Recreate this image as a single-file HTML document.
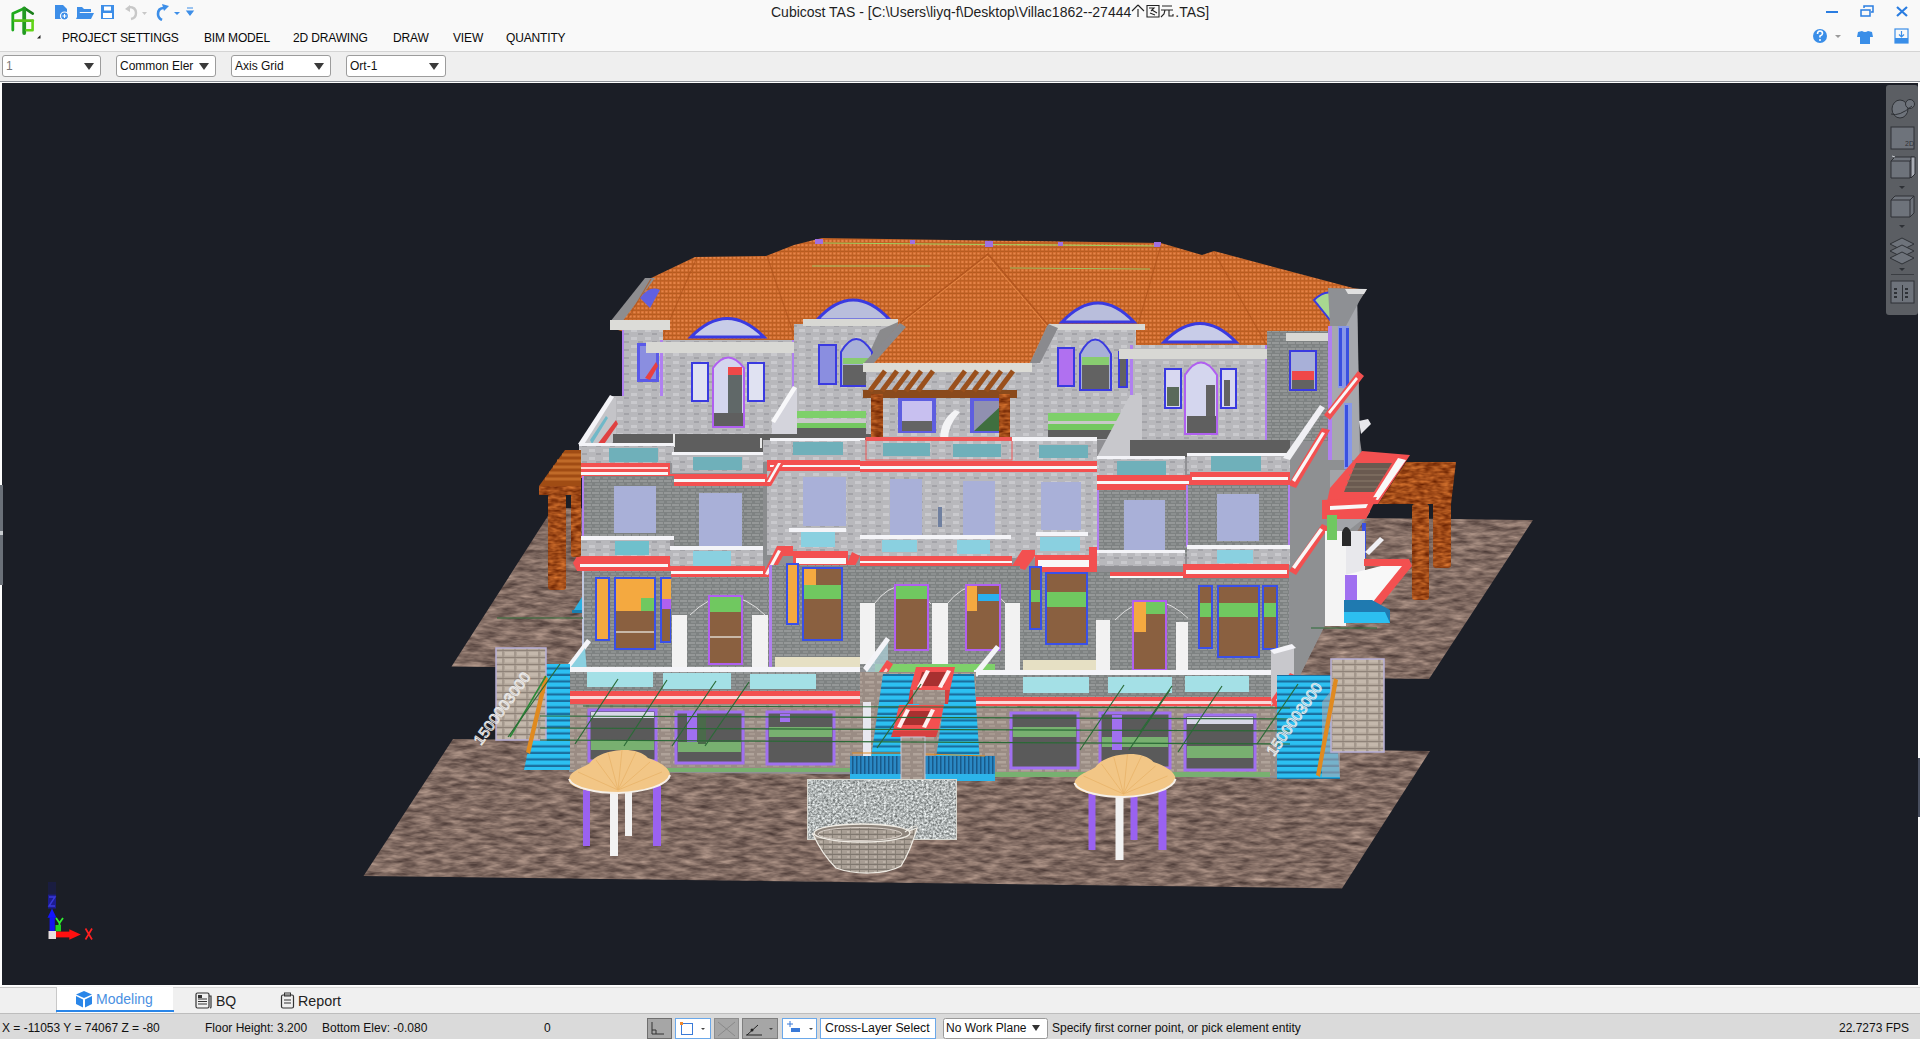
<!DOCTYPE html>
<html><head><meta charset="utf-8">
<style>
*{margin:0;padding:0;box-sizing:border-box}
html,body{width:1920px;height:1039px;overflow:hidden;background:#f0f0f0;font-family:"Liberation Sans",sans-serif;color:#1a1a1a}
.abs{position:absolute}
#top{left:0;top:0;width:1920px;height:51px;background:#f9f9f9}
#topline{left:0;top:51px;width:1920px;height:1px;background:#d4d4d4}
#tb{left:0;top:52px;width:1920px;height:29px;background:#efefef}
#tbline{left:0;top:81px;width:1920px;height:1px;background:#8e9298}
#vpwrap{left:0;top:82px;width:1920px;height:904px;background:#fdfdfd}
#vp{left:2px;top:83px;width:1916px;height:902px;background:#1b1e26;overflow:hidden}
.menu{top:31px;font-size:12px;letter-spacing:-0.15px;color:#0a0a0a;white-space:nowrap}
.combo{top:55px;height:22px;background:#fff;border:1px solid #9c9c9c;border-radius:3px;font-size:12px;padding:3px 0 0 3px;color:#111;overflow:hidden;white-space:nowrap}
.combo .arr{position:absolute;right:6px;top:7px;width:0;height:0;border-left:5px solid transparent;border-right:5px solid transparent;border-top:7px solid #3a3a3a}
#tabs{left:0;top:986px;width:1920px;height:28px;background:#f0f0f0}
#status{left:0;top:1014px;width:1920px;height:25px;background:#dadada}
.st{font-size:12px;top:1021px;color:#111;white-space:nowrap}
</style></head>
<body>
<div id="top" class="abs"></div>
<div id="topline" class="abs"></div>
<div id="tb" class="abs"></div>
<div id="tbline" class="abs"></div>
<div id="vpwrap" class="abs"></div>
<div id="vp" class="abs"></div>
<svg class="abs" style="left:0;top:0" width="1920" height="1039" viewBox="0 0 1920 1039">
<defs>
<filter id="fWood" x="0" y="0" width="1920" height="1039" filterUnits="userSpaceOnUse" color-interpolation-filters="sRGB">
<feTurbulence type="fractalNoise" baseFrequency="0.12 0.3" numOctaves="2" seed="5" result="n"/>
<feColorMatrix in="n" type="matrix" values="0.6 0 0 0 0.33  0.45 0 0 0 0.07  0.25 0 0 0 -0.03  0 0 0 0 1" result="c"/>
<feComposite in="c" in2="SourceGraphic" operator="in"/>
</filter>
<filter id="fGranite" x="807" y="779" width="150" height="61" filterUnits="userSpaceOnUse" color-interpolation-filters="sRGB">
<feTurbulence type="fractalNoise" baseFrequency="0.45" numOctaves="2" seed="11" result="n"/>
<feColorMatrix in="n" type="matrix" values="0.9 0 0 0 0.24  0.9 0 0 0 0.26  0.9 0 0 0 0.26  0 0 0 0 1" result="c"/>
<feComposite in="c" in2="SourceGraphic" operator="in"/>
</filter>
<filter id="fGround" x="0" y="0" width="1920" height="1039" filterUnits="userSpaceOnUse" color-interpolation-filters="sRGB">
<feTurbulence type="fractalNoise" baseFrequency="0.06 0.22" numOctaves="3" seed="7" result="n"/>
<feColorMatrix in="n" type="matrix" values="0.55 0 0 0 0.23  0.5 0 0 0 0.17  0.45 0 0 0 0.16  0 0 0 0 1" result="c"/>
<feComposite in="c" in2="SourceGraphic" operator="in"/>
</filter>
<pattern id="pRoof" width="4" height="4.2" patternUnits="userSpaceOnUse"><rect width="4" height="4.2" fill="#d46e30"/><rect x="0" y="3" width="4" height="1.2" fill="#b45a1e"/><rect x="0" y="0" width="0.9" height="4.2" fill="#bd5f22"/><rect x="1.5" y="0.8" width="1.8" height="1.6" fill="#e6884c"/></pattern>
<pattern id="pStoneL" width="14" height="8" patternUnits="userSpaceOnUse"><rect width="14" height="8" fill="#b8b8bc"/><rect x="1" y="1" width="6" height="3" fill="#c9c9cd"/><rect x="8" y="5" width="5" height="2" fill="#a3a3a8"/></pattern>
<pattern id="pStoneD" width="8" height="6" patternUnits="userSpaceOnUse"><rect width="8" height="6" fill="#7e8282"/><rect x="0" y="0" width="7" height="2" fill="#959898"/><rect x="3" y="3" width="5" height="2" fill="#8c9090"/></pattern>
<pattern id="pStoneB" width="12" height="8" patternUnits="userSpaceOnUse"><rect width="12" height="8" fill="#9a8c84"/><rect x="1" y="1" width="9" height="2.5" fill="#b0a39a"/><rect x="5" y="5" width="6" height="2" fill="#a79990"/></pattern>
<pattern id="pGround" width="22" height="14" patternUnits="userSpaceOnUse"><rect width="22" height="14" fill="#7a6259"/><ellipse cx="6" cy="4" rx="5" ry="2.5" fill="#8a7168"/><ellipse cx="16" cy="10" rx="5" ry="2.5" fill="#6c554d"/></pattern>
<pattern id="pStair" width="10" height="6.5" patternUnits="userSpaceOnUse"><rect width="10" height="6.5" fill="#2cc0f2"/><rect y="4.3" width="10" height="2.2" fill="#1a6e9e"/></pattern><pattern id="pStoneP" width="12" height="7" patternUnits="userSpaceOnUse"><rect width="12" height="7" fill="#b2a69a"/><rect x="1" y="1" width="9" height="3.5" fill="#c4b8ac"/><rect y="6" width="12" height="1" fill="#8e8278"/><rect x="10.5" y="0" width="1" height="6" fill="#968a80"/></pattern>
<pattern id="pWood" width="10" height="12" patternUnits="userSpaceOnUse"><rect width="10" height="12" fill="#b05418"/><path d="M1,2 Q5,6 9,2 M1,8 Q5,12 9,8" stroke="#d27a34" stroke-width="2" fill="none"/><rect x="4" y="5" width="2" height="2" fill="#8a3c10"/></pattern>
<pattern id="pGranite" width="6" height="6" patternUnits="userSpaceOnUse"><rect width="6" height="6" fill="#a8a8a8"/><rect x="1" y="1" width="2" height="2" fill="#d0d0d0"/><rect x="4" y="3" width="1.5" height="2" fill="#707070"/></pattern>
</defs>
<!-- GROUND -->
<g filter="url(#fGround)"><polygon points="553,508 1533,520 1429,679 451.5,666.5" fill="#7a6259"/>
<polygon points="453,739 1430,751 1342,888.5 363.5,876" fill="#7a6259"/></g>
<!-- BUILDING -->
<g id="bld">
<polygon points="579,444 611,396 623,396 623,330 1327,300 1357,292 1360,440 1370,512 1346,548 1325,625 1301,673 1290,778 569,772 569,690 583,690 583,478" fill="#909094"/>
<!-- ROOF -->
<polygon points="618,322 649,279 695,257 766,256 794,245 822,238 1161,243 1202,255 1214,251 1353,288 1366,290 1340,330 1270,350 1030,362 877,362 662,345 618,330" fill="url(#pRoof)"/>
<polygon points="610,322 645,278 655,278 622,322" fill="#8d8d90"/>

<!-- roof ridge lines -->
<line x1="822" y1="243" x2="1161" y2="246" stroke="#9fd060" stroke-width="1.2"/>
<line x1="812" y1="266" x2="930" y2="266" stroke="#a0c060" stroke-width="1"/>
<line x1="1010" y1="268" x2="1150" y2="269" stroke="#a0c060" stroke-width="1"/>
<rect x="815" y="239" width="8" height="5" fill="#a070e0"/><rect x="985" y="241" width="8" height="6" fill="#a070e0"/><rect x="910" y="240" width="5" height="4" fill="#a070e0"/><rect x="1058" y="242" width="5" height="4" fill="#a070e0"/><rect x="1154" y="242" width="7" height="5" fill="#a070e0"/>
<g stroke="#b0541c" stroke-width="1.2" opacity="0.7" fill="none">
<path d="M697,257 L662,338 M767,256 L795,338"/>
<path d="M1161,245 L1133,342 M1214,252 L1267,346"/>
<path d="M651,279 L628,318 M1353,289 L1330,324"/>
</g>
<!-- roof dormer arches -->
<path d="M691,337 Q727,300 764,337Z" fill="#c8cce8" stroke="#3a3ae0" stroke-width="3"/>
<path d="M817,320 Q853,280 890,320Z" fill="#b9bedc" stroke="#3a3ae0" stroke-width="3"/>
<path d="M1062,322 Q1098,284 1134,322Z" fill="#b9bedc" stroke="#3a3ae0" stroke-width="3"/>
<path d="M1164,342 Q1200,305 1236,342Z" fill="#c8cce8" stroke="#3a3ae0" stroke-width="3"/>
<path d="M1314,300 Q1330,285 1340,300 L1330,320Z" fill="#a8d890" stroke="#3a3ae0" stroke-width="2"/>
<path d="M640,298 Q650,285 660,290 L650,308Z" fill="#6060e0"/>
<!-- LEFT TOWER -->
<rect x="623" y="330" width="40" height="66" fill="url(#pStoneL)"/>
<rect x="622" y="330" width="2" height="66" fill="#b080f0"/>
<rect x="610" y="320" width="60" height="10" fill="#dcdcd8"/>
<rect x="637" y="343" width="22" height="39" fill="#5a5ae8"/><rect x="640" y="346" width="16" height="33" fill="#8a8ee0"/>
<polygon points="645,378 656,362 658,366 650,380" fill="#e84040"/>
<!-- LEFT DORMER WING -->
<rect x="662" y="340" width="132" height="95" fill="url(#pStoneL)"/>
<rect x="660" y="340" width="3" height="95" fill="#b080f0"/><rect x="792" y="340" width="3" height="95" fill="#b080f0"/>
<rect x="646" y="342" width="155" height="11" fill="#d8d8d4"/>
<rect x="692" y="363" width="16" height="38" fill="#e0e2f2" stroke="#3a3ae0" stroke-width="2"/>
<rect x="748" y="363" width="16" height="38" fill="#e0e2f2" stroke="#3a3ae0" stroke-width="2"/>
<path d="M713,427 L713,368 Q728,347 744,368 L744,427Z" fill="#d4d6ee" stroke="#b060f0" stroke-width="2"/>
<rect x="728" y="367" width="14" height="58" fill="#606868"/><rect x="728" y="367" width="14" height="8" fill="#f04848"/><rect x="714" y="413" width="29" height="13" fill="#5f5f5f"/>
<!-- MIDDLE-LEFT SECTION -->
<rect x="794" y="324" width="105" height="112" fill="url(#pStoneL)"/>
<rect x="803" y="319" width="95" height="7" fill="#d8d8d4"/>
<polygon points="880,330 898,322 898,360 866,390 866,360" fill="#8a8a8c"/>
<rect x="819" y="345" width="17" height="39" fill="#8a8ee0" stroke="#3a3ae0" stroke-width="2"/>
<path d="M841,386 L841,352 Q856,326 872,352 L872,386Z" fill="#a8b0d8" stroke="#3a3ae0" stroke-width="2"/>
<rect x="843" y="358" width="28" height="6" fill="#88cc70"/><rect x="843" y="365" width="28" height="20" fill="#626262"/>
<rect x="788" y="411" width="84" height="7" fill="#7ed06a"/><rect x="788" y="419" width="84" height="4" fill="#c8c8c8"/><rect x="788" y="423" width="84" height="5" fill="#74c860"/><rect x="790" y="428" width="82" height="8" fill="#5e5e5e"/>
<polygon points="772,438 772,420 794,388 797,388 797,438" fill="#d4d4dc"/><polygon points="771,421 793,386 797,388 775,423" fill="#f8f8fa"/>
<!-- CENTER GABLE + PERGOLA -->
<rect x="866" y="370" width="166" height="72" fill="url(#pStoneL)"/>
<polygon points="988,254 1050,323 1030,360 877,360 900,322" fill="url(#pRoof)"/>
<polygon points="988,254 900,322 877,360 882,345" fill="#cc6628"/>
<polygon points="877,360 900,322 903,326 886,362" fill="#909094"/>
<polygon points="1030,360 1050,323 1054,328 1037,364" fill="#909094"/>
<rect x="863" y="363" width="174" height="9" fill="#dcdcd6"/>
<rect x="898" y="398" width="38" height="35" fill="#5e5ee0"/><rect x="902" y="401" width="30" height="30" fill="#c8c0f0"/><rect x="902" y="421" width="30" height="10" fill="#646464"/>
<rect x="970" y="398" width="36" height="35" fill="#5e5ee0"/><rect x="974" y="401" width="28" height="30" fill="#9090b0"/><polygon points="974,431 1002,405 1002,431" fill="#3f6f3f"/>
<path d="M940,440 Q940,420 955,410 L960,412 Q948,425 948,440Z" fill="#f4f4f6"/>
<!-- CENTER-RIGHT SECTION -->
<rect x="1032" y="324" width="104" height="116" fill="url(#pStoneL)"/>
<rect x="1049" y="324" width="96" height="6" fill="#d8d8d4"/>
<rect x="1058" y="348" width="16" height="38" fill="#b070f0" stroke="#3a3ae0" stroke-width="2"/>
<path d="M1080,390 L1080,354 Q1095,325 1111,354 L1111,390Z" fill="#a8b0d8" stroke="#3a3ae0" stroke-width="2"/>
<rect x="1082" y="357" width="27" height="8" fill="#88cc70"/><rect x="1082" y="365" width="27" height="24" fill="#626262"/>
<rect x="1119" y="352" width="8" height="35" fill="#626262" stroke="#3a3ae0" stroke-width="2"/>
<rect x="1048" y="413" width="80" height="8" fill="#7ed06a"/><rect x="1048" y="421" width="80" height="3" fill="#c8c8c8"/><rect x="1048" y="424" width="80" height="6" fill="#74c860"/><rect x="1048" y="430" width="80" height="9" fill="#5e5e5e"/>
<polygon points="1136,391 1140,391 1140,460 1110,460 1110,442" fill="#d8d8e0"/>
<polygon points="1136,389 1140,392 1113,444 1109,442" fill="#ffffff"/>
<polygon points="988,254 1048,325 1030,363 866,363 900,323" fill="url(#pRoof)"/>
<polygon points="900,323 864,363 874,363 906,327" fill="#8a8a8e"/>
<polygon points="1048,324 1030,363 1040,363 1058,328" fill="#8a8a8e"/>
<path d="M900,323 L988,254 L1048,325" fill="none" stroke="#b4561e" stroke-width="1.5"/>
<path d="M902,323 L988,256 M987,256 L1046,325" fill="none" stroke="#e88a48" stroke-width="0.8"/>
<!-- RIGHT DORMER WING -->
<rect x="1131" y="345" width="137" height="96" fill="url(#pStoneL)"/>
<rect x="1130" y="345" width="3" height="95" fill="#b080f0"/><rect x="1265" y="345" width="3" height="95" fill="#b080f0"/>
<rect x="1119" y="349" width="156" height="10" fill="#d8d8d4"/>
<rect x="1165" y="369" width="16" height="39" fill="#d8d8f0" stroke="#3a3ae0" stroke-width="2"/><rect x="1167" y="387" width="12" height="19" fill="#5a6a5a"/>
<path d="M1185,434 L1185,375 Q1201,350 1217,375 L1217,434Z" fill="#d4d6ee" stroke="#b060f0" stroke-width="2"/>
<rect x="1206" y="385" width="9" height="45" fill="#626262"/><rect x="1187" y="416" width="29" height="17" fill="#5f5f5f"/>
<rect x="1221" y="369" width="15" height="39" fill="#d8d8f0" stroke="#3a3ae0" stroke-width="2"/><rect x="1224" y="380" width="6" height="26" fill="#626262"/>
<!-- RIGHT TOWER -->
<rect x="1267" y="331" width="62" height="110" fill="url(#pStoneD)"/>
<rect x="1286" y="333" width="51" height="8" fill="#d8d8d4"/>
<rect x="1290" y="351" width="26" height="39" fill="#a8b0d8" stroke="#3a3ae0" stroke-width="2"/><rect x="1292" y="371" width="22" height="9" fill="#f04848"/><rect x="1292" y="380" width="22" height="9" fill="#626262"/>
<polygon points="1330,305 1357,298 1360,480 1330,480" fill="#a6a8ae"/>
<rect x="1328" y="326" width="4" height="154" fill="#b080f0"/>
<rect x="1338" y="326" width="11" height="62" fill="#8898e8"/><rect x="1339" y="328" width="3" height="58" fill="#3a50e0"/><rect x="1346" y="328" width="3" height="58" fill="#3a50e0"/>
<rect x="1344" y="403" width="8" height="66" fill="#8898e8"/><rect x="1345" y="405" width="3" height="62" fill="#3a50e0"/>
<polygon points="1328,288 1367,289 1360,300 1346,326 1330,326" fill="#8e9094"/>
<polygon points="1345,289 1367,289 1364,294 1348,294" fill="#e0e0e0"/>
<polygon points="1359,421 1368,419 1371,424 1361,434" fill="#e8e8ec"/>
<!-- ===== TOP BALCONIES + 2ND FLOOR ===== -->
<!-- side walls base (right side) -->
<polygon points="1290,460 1360,460 1362,512 1346,548 1325,625 1301,673 1290,675" fill="#8e9092"/>
<polygon points="1330,470 1360,470 1362,520 1330,545" fill="#a2a4a8"/>
<rect x="1344" y="403" width="8" height="66" fill="#8898e8"/><rect x="1345" y="405" width="3" height="62" fill="#3a50e0"/>

<!-- left balcony -->
<rect x="611" y="396" width="52" height="40" fill="url(#pStoneL)"/>
<polygon points="579,444 611,396 616,398 616,440 585,462" fill="#c4c4c8"/>
<polygon points="578,444 610,395 614,397 583,446" fill="#f4f4f8"/>
<polygon points="590,440 606,416 608,418 592,444" fill="#70b8c8"/>
<polygon points="596,446 616,420 618,424 600,450" fill="#e04040"/>
<rect x="613" y="434" width="260" height="13" fill="#5e5e5e"/><rect x="672" y="446" width="92" height="8" fill="#5e5e5e"/><rect x="763" y="455" width="8" height="20" fill="#8a8c8e"/>
<rect x="673" y="434" width="2" height="13" fill="#e8e8e8"/><rect x="760" y="438" width="2" height="10" fill="#e8e8e8"/>
<rect x="579" y="444" width="95" height="19" fill="url(#pStoneL)"/>
<rect x="579" y="443" width="95" height="3" fill="#f4f4f8"/>
<rect x="609" y="448" width="49" height="14" fill="#6fb0ba"/>
<rect x="672" y="453" width="91" height="20" fill="url(#pStoneL)"/>
<rect x="672" y="452" width="91" height="3" fill="#f4f4f8"/>
<rect x="693" y="457" width="49" height="13" fill="#6fb0ba"/>
<rect x="763" y="440" width="103" height="22" fill="url(#pStoneL)"/>
<rect x="770" y="438" width="95" height="3" fill="#f4f4f8"/>
<rect x="793" y="442" width="50" height="13" fill="#6fb0ba"/>
<!-- center railing -->
<rect x="860" y="440" width="237" height="22" fill="url(#pStoneL)"/>
<rect x="866" y="437" width="146" height="4" fill="#f05858"/>
<rect x="866" y="438" width="146" height="22" fill="none" stroke="#f05858" stroke-width="1"/>
<rect x="883" y="443" width="47" height="13" fill="#6fb0ba"/>
<rect x="953" y="444" width="48" height="13" fill="#6fb0ba"/>
<rect x="1012" y="437" width="85" height="4" fill="#f4f4f8"/>
<rect x="1039" y="445" width="49" height="13" fill="#6fb0ba"/>
<!-- right balcony -->
<polygon points="1097,457 1130,395 1142,395 1142,457" fill="#c8c8cc"/><rect x="1130" y="440" width="160" height="17" fill="#5e5e5e"/>
<rect x="1097" y="457" width="88" height="18" fill="url(#pStoneL)"/>
<rect x="1097" y="456" width="88" height="3" fill="#f4f4f8"/>
<rect x="1117" y="461" width="49" height="14" fill="#6fb0ba"/>
<rect x="1187" y="454" width="103" height="20" fill="url(#pStoneL)"/>
<rect x="1187" y="453" width="103" height="3" fill="#f4f4f8"/>
<rect x="1211" y="456" width="50" height="15" fill="#6fb0ba"/>
<polygon points="1283,458 1320,405 1325,408 1290,460" fill="#f0f0f4"/>
<!-- RED BAND 1 -->
<polygon points="576,463 670,463 670,478 576,478 572,470" fill="#f35050"/>
<rect x="580" y="467" width="88" height="2" fill="#ffd8d8"/><rect x="580" y="472" width="88" height="3" fill="#f8f8f8"/>
<rect x="670" y="474" width="97" height="12" fill="#f35050"/><rect x="673" y="479" width="92" height="3" fill="#f8f8f8"/>
<rect x="767" y="460" width="93" height="11" fill="#f35050"/><rect x="770" y="465" width="90" height="2" fill="#f8f8f8"/>
<rect x="860" y="461" width="237" height="11" fill="#f35050"/><rect x="860" y="466" width="237" height="3" fill="#f8f8f8"/>
<rect x="1094" y="475" width="96" height="15" fill="#f35050"/><rect x="1097" y="481" width="92" height="3" fill="#f8f8f8"/>
<rect x="1190" y="472" width="100" height="13" fill="#f35050"/><rect x="1192" y="477" width="96" height="3" fill="#f8f8f8"/>
<polygon points="1288,485 1322,428 1330,430 1296,488" fill="#f35050"/>
<polygon points="1292,480 1322,432 1325,433 1295,482" fill="#f8f8f8"/>
<polygon points="1324,415 1358,371 1364,376 1330,420" fill="#f35050"/>
<polygon points="1328,412 1356,377 1358,379 1330,414" fill="#f8f8f8"/>
<!-- 2ND FLOOR WALLS -->
<rect x="583" y="476" width="91" height="62" fill="url(#pStoneD)"/>
<rect x="582" y="476" width="2" height="62" fill="#b080f0"/>
<rect x="614" y="486" width="42" height="47" fill="#a9b0d8"/>
<rect x="674" y="486" width="89" height="63" fill="url(#pStoneD)"/>
<rect x="699" y="493" width="43" height="54" fill="#a9b0d8"/>
<polygon points="763,486 775,472 775,560 763,560" fill="#8a8c8e"/>
<rect x="767" y="471" width="93" height="84" fill="url(#pStoneL)"/>
<rect x="803" y="477" width="43" height="49" fill="#a9b0d8"/>
<rect x="860" y="472" width="237" height="86" fill="url(#pStoneL)"/>
<rect x="890" y="479" width="32" height="56" fill="#a9b0d8"/>
<rect x="963" y="481" width="32" height="55" fill="#a9b0d8"/>
<rect x="1041" y="482" width="40" height="48" fill="#a9b0d8"/>
<rect x="938" y="507" width="4" height="20" fill="#7080a0"/>
<rect x="1099" y="490" width="88" height="66" fill="url(#pStoneD)"/>
<rect x="1097" y="490" width="2" height="66" fill="#b080f0"/>
<rect x="1124" y="500" width="41" height="52" fill="#a9b0d8"/>
<rect x="1187" y="485" width="103" height="62" fill="url(#pStoneD)"/>
<rect x="1186" y="485" width="2" height="62" fill="#b080f0"/><rect x="1288" y="485" width="2" height="80" fill="#b080f0"/>
<rect x="1217" y="494" width="42" height="47" fill="#a9b0d8"/>
<polygon points="763,486 777,460 786,460 771,486" fill="#f35050"/><polygon points="767,482 778,463 781,463 770,482" fill="#f8f8f8"/>
<!-- 2nd floor ledges/parapets -->
<rect x="580" y="539" width="90" height="19" fill="url(#pStoneL)"/><rect x="580" y="536" width="94" height="4" fill="#f4f4f8"/>
<rect x="615" y="541" width="34" height="14" fill="#6fc0cc"/>
<rect x="670" y="549" width="93" height="18" fill="url(#pStoneL)"/><rect x="670" y="546" width="93" height="4" fill="#f4f4f8"/>
<rect x="693" y="551" width="38" height="15" fill="#8ad0e0"/>
<rect x="789" y="531" width="57" height="20" fill="url(#pStoneL)"/><rect x="789" y="528" width="57" height="4" fill="#f4f4f8"/>
<rect x="801" y="532" width="34" height="15" fill="#8ad0e0"/>
<rect x="860" y="538" width="151" height="20" fill="url(#pStoneL)"/><rect x="860" y="535" width="151" height="4" fill="#f4f4f8"/>
<rect x="882" y="540" width="35" height="12" fill="#8ad0e0"/><rect x="957" y="540" width="33" height="14" fill="#8ad0e0"/>
<rect x="1036" y="535" width="52" height="20" fill="url(#pStoneL)"/><rect x="1036" y="532" width="52" height="4" fill="#f4f4f8"/>
<rect x="1040" y="537" width="40" height="14" fill="#8ad0e0"/>
<rect x="1097" y="552" width="88" height="14" fill="url(#pStoneL)"/><rect x="1097" y="550" width="88" height="3" fill="#f4f4f8"/>
<rect x="1187" y="549" width="103" height="16" fill="url(#pStoneL)"/><rect x="1187" y="545" width="103" height="4" fill="#f4f4f8"/>
<rect x="1217" y="550" width="36" height="13" fill="#8ad0e0"/>
<!-- RED BAND 2 -->
<polygon points="577,556 670,556 670,571 577,571 573,563" fill="#f35050"/><rect x="580" y="564" width="88" height="3" fill="#f8f8f8"/>
<rect x="668" y="566" width="97" height="12" fill="#f35050"/><rect x="670" y="571" width="93" height="3" fill="#f8f8f8"/>
<polygon points="761,578 777,546 793,546 793,556 783,556 769,580" fill="#f35050"/><polygon points="765,574 778,550 781,551 768,575" fill="#f8f8f8"/>
<rect x="793" y="551" width="55" height="19" fill="#f35050"/><rect x="796" y="558" width="50" height="6" fill="#f8f8f8"/>
<polygon points="844,571 852,552 860,556 852,572" fill="#f35050"/>
<rect x="860" y="556" width="152" height="10" fill="#f35050"/><rect x="860" y="561" width="152" height="2" fill="#f8f8f8"/>
<polygon points="1012,566 1022,550 1035,550 1035,556 1025,570" fill="#f35050"/>
<rect x="1035" y="555" width="62" height="18" fill="#f35050"/><rect x="1038" y="560" width="56" height="7" fill="#f8f8f8"/><rect x="1089" y="547" width="8" height="32" fill="#f35050"/>
<rect x="1094" y="572" width="90" height="11" fill="#f35050"/><rect x="1097" y="576" width="86" height="3" fill="#f8f8f8"/><rect x="1183" y="564" width="106" height="16" fill="#f35050"/><rect x="1186" y="570" width="101" height="4" fill="#f8f8f8"/>
<polygon points="1289,571 1322,524 1329,527 1296,575" fill="#f35050"/>
<polygon points="1292,567 1320,528 1323,530 1295,569" fill="#f8f8f8"/>
<!-- right side entry roof -->
<polygon points="1362,451 1410,455 1378,504 1326,506 1330,488" fill="#f35050"/>
<polygon points="1356,463 1392,463 1374,492 1344,492" fill="#6a5a50"/>
<g stroke="#8a7a6a" stroke-width="1"><line x1="1352" y1="469" x2="1388" y2="469"/><line x1="1349" y1="475" x2="1384" y2="475"/><line x1="1347" y1="481" x2="1380" y2="481"/><line x1="1345" y1="487" x2="1377" y2="487"/></g>
<polygon points="1398,458 1406,460 1378,500 1372,499" fill="#f8f8f8"/>
<polygon points="1322,500 1377,497 1366,519 1322,519" fill="#f35050"/>
<polygon points="1330,506 1368,504 1366,508 1330,510" fill="#f8f8f8"/>
<rect x="1362" y="523" width="4" height="35" fill="#3a50e0"/>
<!-- ===== 1ST FLOOR ===== -->
<rect x="583" y="571" width="88" height="98" fill="url(#pStoneD)"/>
<rect x="582" y="571" width="2" height="98" fill="#c0c8e0"/>
<rect x="596" y="578" width="13" height="62" fill="#f4a940" stroke="#3a50e8" stroke-width="2"/>
<rect x="615" y="578" width="40" height="71" fill="#8a6040" stroke="#3a50e8" stroke-width="2"/>
<rect x="616" y="579" width="38" height="32" fill="#f4a940"/><rect x="641" y="598" width="13" height="13" fill="#70c860"/>
<rect x="616" y="631" width="38" height="2" fill="#c8b8a8"/>
<rect x="661" y="578" width="10" height="64" fill="#8a6040" stroke="#3a50e8" stroke-width="2"/><rect x="662" y="579" width="9" height="20" fill="#f4a940"/><rect x="662" y="599" width="9" height="10" fill="#b060f0"/>
<rect x="671" y="577" width="98" height="92" fill="url(#pStoneD)"/>
<rect x="672" y="615" width="15" height="54" fill="#f2f2f2"/><rect x="752" y="615" width="16" height="54" fill="#f2f2f2"/>
<path d="M690,615 Q727,578 765,615" fill="none" stroke="#e0e0e0" stroke-width="1"/>
<rect x="709" y="596" width="33" height="68" fill="#8a6040" stroke="#b060f0" stroke-width="2"/><rect x="710" y="597" width="31" height="15" fill="#70c860"/><rect x="710" y="636" width="31" height="2" fill="#c8b8a8"/>
<rect x="769" y="565" width="91" height="104" fill="url(#pStoneD)"/>
<rect x="769" y="565" width="3" height="104" fill="#b080f0"/>
<rect x="787" y="564" width="11" height="60" fill="#f4a940" stroke="#3a50e8" stroke-width="2"/>
<rect x="803" y="568" width="39" height="72" fill="#8a6040" stroke="#3a50e8" stroke-width="2"/><rect x="804" y="585" width="37" height="14" fill="#70c860"/><rect x="804" y="569" width="12" height="16" fill="#f4a940"/>
<rect x="775" y="657" width="85" height="13" fill="#e6e0c4"/>
<rect x="860" y="566" width="160" height="104" fill="url(#pStoneD)"/>
<path d="M874,604 Q902,568 931,604 M947,604 Q976,568 1006,604" fill="none" stroke="#e0e0e0" stroke-width="1"/>
<rect x="895" y="585" width="33" height="65" fill="#8a6040" stroke="#b060f0" stroke-width="2"/><rect x="896" y="586" width="31" height="13" fill="#70c860"/>
<rect x="966" y="585" width="34" height="65" fill="#8a6040" stroke="#b060f0" stroke-width="2"/><rect x="967" y="586" width="10" height="25" fill="#f4a940"/><rect x="978" y="594" width="21" height="7" fill="#2ab0f0"/>
<rect x="860" y="603" width="15" height="61" fill="#f2f2f2"/><rect x="932" y="603" width="16" height="61" fill="#f2f2f2"/><rect x="1005" y="603" width="15" height="67" fill="#f2f2f2"/>
<rect x="875" y="664" width="120" height="10" fill="#7ed06a"/>
<rect x="1020" y="572" width="90" height="98" fill="url(#pStoneD)"/>
<rect x="1030" y="567" width="11" height="62" fill="#8a6040" stroke="#3a50e8" stroke-width="2"/><rect x="1031" y="590" width="9" height="12" fill="#70c860"/>
<rect x="1046" y="573" width="41" height="71" fill="#8a6040" stroke="#3a50e8" stroke-width="2"/><rect x="1047" y="592" width="39" height="15" fill="#70c860"/>
<rect x="1023" y="660" width="80" height="11" fill="#e6e0c4"/>
<rect x="1096" y="620" width="14" height="53" fill="#f2f2f2"/>
<rect x="1110" y="578" width="80" height="92" fill="url(#pStoneD)"/>
<path d="M1115,620 Q1152,582 1190,620" fill="none" stroke="#e0e0e0" stroke-width="1"/>
<rect x="1133" y="601" width="33" height="69" fill="#8a6040" stroke="#b060f0" stroke-width="2"/><rect x="1134" y="602" width="12" height="30" fill="#f4a940"/><rect x="1146" y="602" width="19" height="12" fill="#70c860"/>
<rect x="1176" y="622" width="16" height="53" fill="#f2f2f2"/>
<rect x="1188" y="578" width="101" height="97" fill="url(#pStoneD)"/>
<rect x="1199" y="586" width="13" height="62" fill="#8a6040" stroke="#3a50e8" stroke-width="2"/><rect x="1200" y="603" width="11" height="14" fill="#70c860"/>
<rect x="1218" y="586" width="41" height="71" fill="#8a6040" stroke="#3a50e8" stroke-width="2"/><rect x="1219" y="603" width="39" height="14" fill="#70c860"/>
<rect x="1263" y="586" width="14" height="63" fill="#8a6040" stroke="#3a50e8" stroke-width="2"/><rect x="1264" y="603" width="12" height="14" fill="#70c860"/>
<!-- right side column & entry -->
<rect x="1325" y="531" width="21" height="95" fill="#f4f4f4"/><rect x="1346" y="531" width="19" height="60" fill="#e8e8ec"/>
<rect x="1327" y="515" width="10" height="25" fill="#70c860"/>
<path d="M1342,546 L1342,532 Q1346,522 1351,532 L1351,546Z" fill="#2a2a2a"/>
<polygon points="1365,552 1380,537 1384,540 1369,555" fill="#f0f0f4"/>
<polygon points="1345,575 1409,559 1409,566 1372,610 1345,615" fill="#f8f8f8"/>
<polygon points="1364,559 1409,559 1412,566 1375,612 1368,608 1402,566 1364,566" fill="#f35050"/>
<rect x="1345" y="575" width="12" height="40" fill="#a070f0"/>
<polygon points="1344,600 1372,600 1390,610 1390,623 1344,623" fill="#1f7ab0"/>
<polygon points="1344,612 1385,612 1390,623 1344,623" fill="#2cbff0"/>
<!-- ===== FRONT BALCONY ===== -->
<polygon points="565,668 587,639 591,642 569,671" fill="#f4f4f8"/>
<polygon points="567,672 585,648 587,672" fill="#8ad0e0"/>
<rect x="565" y="671" width="295" height="20" fill="url(#pStoneD)"/>
<rect x="565" y="667" width="295" height="5" fill="#f4f4f8"/>
<rect x="587" y="672" width="66" height="15" fill="#a4e0e6"/><rect x="663" y="673" width="68" height="16" fill="#a4e0e6"/><rect x="750" y="674" width="66" height="15" fill="#a4e0e6"/>
<polygon points="562,691 860,691 860,704 562,704 558,698" fill="#f35050"/><rect x="566" y="696" width="294" height="3" fill="#fbd8d8"/>
<polygon points="974,673 1275,673 1275,697 974,697" fill="url(#pStoneD)"/>
<rect x="974" y="670" width="300" height="5" fill="#f4f4f8"/>
<rect x="1023" y="677" width="66" height="16" fill="#a4e0e6"/><rect x="1108" y="677" width="64" height="16" fill="#a4e0e6"/><rect x="1185" y="676" width="64" height="16" fill="#a4e0e6"/>
<polygon points="972,697 1275,697 1275,708 972,708 968,702" fill="#f35050"/><rect x="976" y="701" width="298" height="3" fill="#fbd8d8"/>
<polygon points="1271,650 1294,648 1294,675 1271,706" fill="#c8c8cc"/>
<polygon points="1270,650 1292,644 1296,648 1274,654" fill="#f4f4f8"/>
<polygon points="1271,700 1290,673 1297,676 1296,688 1276,710" fill="#f35050"/>
<polygon points="1276,700 1292,678 1294,680 1278,702" fill="#f8f8f8"/>
<!-- center stair railings -->
<polygon points="866,668 888,640 888,690 866,700" fill="#a8c8d0" opacity="0.8"/><polygon points="863,668 886,637 890,640 867,672" fill="#f4f4f8"/>
<polygon points="860,700 887,660 893,664 867,708" fill="#f35050"/><polygon points="866,698 886,668 888,670 868,700" fill="#fbd0d0"/>
<polygon points="973,673 996,645 1000,648 977,677" fill="#f4f4f8"/>
<!-- ===== GROUND FLOOR ===== -->
<rect x="569" y="704" width="291" height="66" fill="url(#pStoneB)"/>
<rect x="589" y="710" width="67" height="51" fill="#5a5a5a" stroke="#a070f0" stroke-width="3"/><rect x="591" y="740" width="63" height="10" fill="#78b070"/><rect x="591" y="712" width="63" height="6" fill="#d8d8e8"/>
<rect x="676" y="712" width="67" height="51" fill="#5a5a5a" stroke="#a070f0" stroke-width="3"/><rect x="678" y="742" width="63" height="10" fill="#78b070"/><rect x="687" y="712" width="10" height="30" fill="#a070f0"/><rect x="698" y="714" width="8" height="30" fill="#4a6a4a"/>
<rect x="767" y="712" width="67" height="52" fill="#5a5a5a" stroke="#a070f0" stroke-width="3"/><rect x="769" y="727" width="63" height="10" fill="#78b070"/><rect x="780" y="714" width="10" height="8" fill="#a070f0"/>
<rect x="667" y="768" width="193" height="4" fill="#78b070"/>
<rect x="974" y="706" width="301" height="70" fill="url(#pStoneB)"/>
<rect x="1011" y="713" width="67" height="55" fill="#5a5a5a" stroke="#a070f0" stroke-width="3"/><rect x="1013" y="727" width="63" height="10" fill="#78b070"/>
<rect x="1100" y="713" width="70" height="55" fill="#5a5a5a" stroke="#a070f0" stroke-width="3"/><rect x="1102" y="737" width="66" height="10" fill="#78b070"/><rect x="1112" y="715" width="10" height="35" fill="#a070f0"/>
<rect x="1185" y="715" width="70" height="55" fill="#5a5a5a" stroke="#a070f0" stroke-width="3"/><rect x="1187" y="746" width="66" height="12" fill="#78b070"/><rect x="1187" y="717" width="66" height="7" fill="#d8d8e8"/>
<rect x="974" y="772" width="296" height="5" fill="#78b070"/>
<!-- ===== STAIRS ===== -->
<rect x="860" y="672" width="116" height="106" fill="url(#pStoneB)"/>

<polygon points="546,664 570,664 570,770 524,770" fill="url(#pStair)"/>
<polygon points="883,674 925,674 905,779 868,779" fill="url(#pStair)"/>
<polygon points="948,674 974,674 981,779 933,779" fill="url(#pStair)"/>
<rect x="863" y="702" width="8" height="62" fill="#e8e8f0"/>
<polygon points="1277,675 1332,675 1340,779 1277,779" fill="url(#pStair)"/>

<polygon points="1322,702 1340,680 1340,777 1322,777" fill="#a8a8b0" opacity="0.6"/>
<pattern id="pGrate" width="4" height="20" patternUnits="userSpaceOnUse"><rect width="4" height="20" fill="#2a88c4"/><rect x="0" width="1.5" height="20" fill="#185a8a"/></pattern>
<rect x="850" y="756" width="145" height="18" fill="url(#pGrate)"/>
<rect x="850" y="774" width="145" height="7" fill="#2cb4ea"/>
<line x1="852" y1="753" x2="901" y2="753" stroke="#e08a20" stroke-width="1.2"/><line x1="925" y1="754" x2="985" y2="756" stroke="#e08a20" stroke-width="1.2"/>
<!-- planters -->
<polygon points="916,667 955,667 950,690 910,690" fill="#f35050"/>
<polygon points="922,672 947,672 944,686 918,686" fill="#a83030"/>
<polygon points="917,687 926,670 930,671 921,688" fill="#fff0f0"/><polygon points="938,687 947,670 951,671 942,688" fill="#fff0f0"/>
<polygon points="910,690 950,690 948,704 908,704" fill="#d84040"/>
<rect x="913" y="690" width="32" height="14" fill="url(#pStoneB)"/>
<polygon points="899,705 944,705 938,731 893,731" fill="#f35050"/>
<polygon points="905,711 930,711 927,725 901,725" fill="#a83030"/>
<polygon points="897,727 906,709 910,710 901,728" fill="#fff0f0"/><polygon points="922,727 931,709 935,710 926,728" fill="#fff0f0"/>
<polygon points="893,731 938,731 936,737 891,737" fill="#d84040"/>
<rect x="901" y="737" width="24" height="43" fill="url(#pStoneB)" stroke="#c8c8d8" stroke-width="1"/>
<!-- stone pillars -->
<rect x="496" y="648" width="50" height="92" fill="url(#pStoneP)" stroke="#b8b0d8" stroke-width="1.5"/>
<rect x="1331" y="659" width="53" height="93" fill="url(#pStoneP)" stroke="#b8b0d8" stroke-width="1.5"/>
<polygon points="526,752 544,676 548,678 530,754" fill="#e08a20"/><polygon points="1316,775 1334,678 1338,680 1320,777" fill="#e08a20"/><line x1="510" y1="737" x2="546" y2="676" stroke="#2a8a36" stroke-width="1.5"/>
<!-- ===== PERGOLAS ===== -->
<polygon points="565,450 581,450 581,486 539,486" fill="#a04c14"/>
<g stroke="#c06a28" stroke-width="3"><line x1="562" y1="455" x2="581" y2="455"/><line x1="557" y1="461" x2="581" y2="461"/><line x1="553" y1="467" x2="581" y2="467"/><line x1="549" y1="473" x2="581" y2="473"/><line x1="545" y1="479" x2="581" y2="479"/></g>
<rect x="539" y="486" width="42" height="9" fill="#b05418" filter="url(#fWood)"/>
<rect x="548" y="494" width="18" height="96" rx="3" fill="#b05418" filter="url(#fWood)"/>
<rect x="571" y="494" width="10" height="63" rx="2" fill="#b05418" filter="url(#fWood)"/>
<polygon points="572,613 582,597 582,613" fill="#2cb0e0"/><rect x="572" y="610" width="10" height="3" fill="#1a80b0"/>
<polygon points="1406,462 1456,462 1451,504 1378,504" fill="#b05418" filter="url(#fWood)"/>
<rect x="1412" y="504" width="17" height="96" rx="3" fill="#b05418" filter="url(#fWood)"/>
<rect x="1433" y="501" width="18" height="67" rx="3" fill="#b05418" filter="url(#fWood)"/>
<rect x="863" y="390" width="154" height="8" fill="#8a4a1c"/>
<rect x="871" y="394" width="12" height="43" fill="#b05418" filter="url(#fWood)"/>
<rect x="999" y="394" width="11" height="43" fill="#b05418" filter="url(#fWood)"/>
<g stroke="#9a501c" stroke-width="5">
<line x1="870" y1="391" x2="885" y2="371"/><line x1="882" y1="391" x2="897" y2="371"/><line x1="894" y1="391" x2="909" y2="371"/><line x1="906" y1="391" x2="921" y2="371"/><line x1="918" y1="391" x2="933" y2="371"/>
<line x1="950" y1="391" x2="965" y2="371"/><line x1="962" y1="391" x2="977" y2="371"/><line x1="974" y1="391" x2="989" y2="371"/><line x1="986" y1="391" x2="1001" y2="371"/><line x1="998" y1="391" x2="1013" y2="371"/>
</g>
<!-- ===== GRANITE & BASKET ===== -->
<rect x="807" y="779" width="150" height="61" fill="#b0b4b4" filter="url(#fGranite)"/>
<rect x="807.5" y="779.5" width="149" height="60" fill="none" stroke="#d8d8d0" stroke-width="1"/>
<pattern id="pBasket" width="9" height="5" patternUnits="userSpaceOnUse"><rect width="9" height="5" fill="#a89e94"/><rect y="3.8" width="9" height="1.2" fill="#7e766e"/><rect x="4" y="0" width="1" height="4" fill="#8a8278"/><rect x="1" y="1" width="2.5" height="2" fill="#bcb2a8"/></pattern>
<path d="M813,834 C820,850 828,860 836,868 C855,875 885,875 901,866 C908,855 913,842 917,828 C895,838 835,842 813,834Z" fill="url(#pBasket)" stroke="#f0ece4" stroke-width="1.2"/>
<ellipse cx="862" cy="833" rx="48" ry="9" fill="#8e857c" stroke="#f0ece4" stroke-width="1.4"/>
<ellipse cx="860" cy="834" rx="42" ry="6.5" fill="url(#pBasket)" stroke="#e8e0d8" stroke-width="0.8"/>
<path d="M905,832 Q912,826 917,826" fill="none" stroke="#f0ece4" stroke-width="1.2"/>
<!-- ===== TABLES ===== -->
<g transform="translate(0,0)">
<rect x="583" y="788" width="7" height="58" fill="#9a62f0"/><rect x="653" y="786" width="8" height="60" fill="#9a62f0"/>
<rect x="610" y="790" width="8" height="66" fill="#f2f2f2"/><rect x="625" y="790" width="7" height="46" fill="#f2f2f2"/>
<path d="M569,780 C569,771 583,768 590,763 C598,750 636,744 648,758 C660,762 670,768 670,775 C668,786 640,792 618,793 C595,793 569,789 569,780Z" fill="#f2c686"/>
<g stroke="#e6ae62" stroke-width="0.8" opacity="0.8"><path d="M618,790 L596,760 M618,790 L608,752 M618,790 L622,750 M618,790 L636,752 M618,790 L650,762 M618,790 L662,772 M618,790 L578,772"/></g>
<path d="M569,779 C573,789 600,793 618,793 C645,792 668,785 670,775" fill="none" stroke="#f6f0e8" stroke-width="2"/>
</g>
<g transform="translate(505.5,4)">
<rect x="583" y="788" width="7" height="58" fill="#9a62f0"/><rect x="653" y="786" width="8" height="60" fill="#9a62f0"/>
<rect x="610" y="790" width="8" height="66" fill="#f2f2f2"/><rect x="625" y="790" width="7" height="46" fill="#9a62f0"/>
<path d="M569,780 C569,771 583,768 590,763 C598,750 636,744 648,758 C660,762 670,768 670,775 C668,786 640,792 618,793 C595,793 569,789 569,780Z" fill="#f2c686"/>
<g stroke="#e6ae62" stroke-width="0.8" opacity="0.8"><path d="M618,790 L596,760 M618,790 L608,752 M618,790 L622,750 M618,790 L636,752 M618,790 L650,762 M618,790 L662,772 M618,790 L578,772"/></g>
<path d="M569,779 C573,789 600,793 618,793 C645,792 668,785 670,775" fill="none" stroke="#f6f0e8" stroke-width="2"/>
</g>
<!-- dimension lines -->
<g stroke="#2a6a36" stroke-width="1.2" fill="none">
<line x1="497" y1="618" x2="583" y2="618"/><line x1="1311" y1="628" x2="1377" y2="628"/>
<line x1="583" y1="706" x2="1290" y2="708"/><line x1="540" y1="716" x2="1290" y2="719"/>
<line x1="540" y1="728" x2="1290" y2="731"/><line x1="540" y1="740" x2="1290" y2="744"/>
<line x1="575" y1="744" x2="618" y2="679"/><line x1="624" y1="746" x2="667" y2="680"/>
<line x1="672" y1="746" x2="716" y2="681"/><line x1="705" y1="746" x2="749" y2="682"/>
<line x1="877" y1="748" x2="921" y2="684"/><line x1="1080" y1="750" x2="1124" y2="685"/>
<line x1="1129" y1="750" x2="1170" y2="690"/><line x1="1140" y1="732" x2="1172" y2="686"/><line x1="1178" y1="752" x2="1222" y2="686"/>
<line x1="508" y1="737" x2="560" y2="664"/><line x1="1257" y1="744" x2="1298" y2="684"/>
</g>
<text transform="translate(481,746) rotate(-54)" font-family="Liberation Sans" font-size="15" fill="none" stroke="#ececec" stroke-width="0.9" letter-spacing="0.2">1500003000</text>
<text transform="translate(1274,757) rotate(-55)" font-family="Liberation Sans" font-size="15" fill="none" stroke="#ececec" stroke-width="0.9" letter-spacing="0.2">1500003000</text>
</g>
</svg>


<div class="abs" style="left:0;top:485px;width:3px;height:100px;background:#6a7078"></div>
<div class="abs" style="left:0;top:531px;width:3px;height:4px;background:#c8ccd0"></div>
<div class="abs" style="left:1918px;top:758px;width:2px;height:59px;background:#4a5060"></div>
<!-- menu -->
<div class="abs menu" style="left:62px">PROJECT SETTINGS</div>
<div class="abs menu" style="left:204px">BIM MODEL</div>
<div class="abs menu" style="left:293px">2D DRAWING</div>
<div class="abs menu" style="left:393px">DRAW</div>
<div class="abs menu" style="left:453px">VIEW</div>
<div class="abs menu" style="left:506px">QUANTITY</div>
<div class="abs" id="title" style="left:771px;top:4px;font-size:14px;color:#1e1e1e;white-space:nowrap">Cubicost TAS - [C:\Users\liyq-f\Desktop\Villac1862--27444<svg width="44" height="14" viewBox="0 0 44 14" style="vertical-align:-1px"><g fill="none" stroke="#222" stroke-width="1.1"><path d="M7,1 L1,7 M7,1 L13,7 M7,5 L7,13"/><path d="M16,1.5 H28 V13 H16Z M18,4 L23,4 L20,7 M21,6 L26,9 M19,9 L24,11"/><path d="M31,2 H41 M30,6 H42 M34,6 L33,10 L30,13 M38,6 V12 H42 V10"/></g></svg>.TAS]</div>
<!-- logo -->
<svg class="abs" style="left:0;top:0" width="46" height="42" viewBox="0 0 46 42">
<g fill="none" stroke-linecap="round" stroke-linejoin="round">
<path d="M12.8,30 V13.5 L24,8.5" stroke="#1eaa1e" stroke-width="2.8"/>
<path d="M24.3,8.2 L32.8,13.6" stroke="#1a7e1a" stroke-width="2.6"/>
<path d="M24.2,8.5 V33" stroke="#229a22" stroke-width="3.8"/>
<path d="M14.5,20.6 H32.8" stroke="#58c01a" stroke-width="2.6"/>
<path d="M32.6,20.8 V30.2 H26.5" stroke="#62d418" stroke-width="2.6"/>
</g>
<polygon points="40.5,35 40.5,38.5 37,38.5" fill="#222"/>
</svg>
<!-- quick access -->
<svg class="abs" style="left:52px;top:3px" width="145" height="18" viewBox="0 0 145 18">
<path d="M3,2 H11 L15,6 V16 H3Z" fill="#3d8ee8"/><circle cx="12.5" cy="13" r="4" fill="#3d8ee8" stroke="#fff" stroke-width="1.2"/><path d="M10.5,13 H14.5 M12.5,11 V15" stroke="#fff" stroke-width="1.1"/>
<path d="M25,4 H30 L32,6 H39 V9 H28 L25,16Z" fill="#3d8ee8"/><path d="M27,10 H42 L39,16 H24Z" fill="#3d8ee8"/>
<path d="M49,2 H62 V16 H49Z" fill="#3d8ee8"/><rect x="52" y="3.5" width="7" height="4" fill="#fff"/><rect x="51" y="10" width="9" height="5" fill="#fff"/>
<path d="M77,4 Q84,4 84,10 Q84,15 79,16" fill="none" stroke="#c8c8c8" stroke-width="2.4"/><path d="M73,6 L78,2 L78,9Z" fill="#c8c8c8"/>
<path d="M90,9 L95,9 L92.5,12Z" fill="#c8c8c8"/>
<path d="M112,5 Q106,5 106,11 Q106,15 110,17" fill="none" stroke="#3d8ee8" stroke-width="2.6"/><path d="M110,1 L117,3 L112,8Z" fill="#3d8ee8"/>
<path d="M122,9 L128,9 L125,12Z" fill="#3d8ee8"/>
<path d="M135,5 H141 M135,8 L141,8 L138,12Z" stroke="#3d8ee8" stroke-width="1.2" fill="#3d8ee8"/>
</svg>
<!-- window controls -->
<svg class="abs" style="left:1810px;top:2px" width="110" height="46" viewBox="0 0 110 46">
<rect x="16" y="9" width="12" height="2" fill="#2a7de1"/>
<rect x="51" y="8" width="9" height="6" fill="none" stroke="#2a7de1" stroke-width="1.5"/><path d="M54,6 V4 H63 V10 H61" fill="none" stroke="#2a7de1" stroke-width="1.5"/>
<path d="M87,5 L97,14 M97,5 L87,14" stroke="#2a7de1" stroke-width="2.2"/>
<circle cx="10" cy="34" r="7" fill="#3a8ee8"/><path d="M7.5,32 Q7.5,29 10,29 Q12.5,29 12.5,31.5 Q12.5,33 10,34 V35.5" fill="none" stroke="#fff" stroke-width="1.6"/><circle cx="10" cy="38" r="1" fill="#fff"/>
<path d="M25,33 L31,33 L28,36Z" fill="#9a9a9a"/>
<path d="M48,30 L52,29 Q55,31 58,29 L62,30 L63,35 L60,35 V42 H50 V35 H47Z" fill="#3a8ee8"/>
<rect x="85" y="27" width="13" height="14" fill="none" stroke="#3a8ee8" stroke-width="1.2"/><rect x="85" y="36" width="13" height="5" fill="#3a8ee8"/><path d="M91.5,29 V35 M89,32.5 L91.5,35 L94,32.5" fill="none" stroke="#3a8ee8" stroke-width="1.2"/>
</svg>

<!-- combos -->
<div class="abs combo" style="left:2px;width:99px;color:#777">1<span class="arr"></span></div>
<div class="abs combo" style="left:116px;width:100px">Common Eler<span class="arr"></span></div>
<div class="abs combo" style="left:231px;width:100px">Axis Grid<span class="arr"></span></div>
<div class="abs combo" style="left:346px;width:100px">Ort-1<span class="arr"></span></div>

<!-- right viewport toolbar -->
<svg class="abs" style="left:1885px;top:84px" width="34" height="232" viewBox="0 0 34 232">
<rect x="1" y="1" width="32" height="230" rx="3" fill="#5b5e63"/>
<g fill="#6e737b" stroke="#2e3136" stroke-width="1">
<ellipse cx="15" cy="25" rx="8" ry="9"/><circle cx="25" cy="20" r="4.5"/>
<path d="M6,30 Q14,33 27,22" fill="none"/>
<rect x="6" y="43" width="23" height="22"/>
<path d="M6,77 L10,73 H29 V90 L25,94 H6Z"/><path d="M6,77 H25 V94 M25,77 L29,73" fill="none"/>
<path d="M6,116 L10,112 H29 V129 L25,133 H6Z"/><path d="M6,116 H25 V133 M25,116 L29,112" fill="none"/>
<path d="M17,154 L29,160 L17,166 L5,160Z"/><path d="M17,161 L29,167 L17,173 L5,167Z"/><path d="M17,168 L29,174 L17,180 L5,174Z"/>
<rect x="6" y="197" width="23" height="22"/>
</g>
<path d="M7,72 L10,73" stroke="#c8ccd2"/>
<polygon points="26,73 30,73 30,90 26,94" fill="#a8acb4" stroke="#2e3136" stroke-width="1"/>
<text x="20" y="62" font-size="7" fill="#2e3136" font-family="Liberation Sans">2D</text>
<g fill="#2e3136"><path d="M14,102 L20,102 L17,105Z"/><path d="M14,141 L20,141 L17,144Z"/><path d="M14,184 L20,184 L17,187Z"/></g>
<rect x="6" y="190" width="23" height="1" fill="#3a3d42"/>
<g fill="#2e3136"><rect x="9" y="204" width="3" height="2"/><rect x="9" y="208" width="3" height="2"/><rect x="9" y="212" width="3" height="2"/><rect x="20" y="204" width="3" height="2"/><rect x="20" y="208" width="3" height="2"/><rect x="20" y="212" width="3" height="2"/><rect x="17" y="201" width="1" height="16"/><!-- dimension lines -->
<g stroke="#2a6a36" stroke-width="1.2" fill="none">
<line x1="497" y1="618" x2="583" y2="618"/><line x1="1311" y1="628" x2="1377" y2="628"/>
<line x1="583" y1="706" x2="1290" y2="708"/><line x1="540" y1="716" x2="1290" y2="719"/>
<line x1="540" y1="728" x2="1290" y2="731"/><line x1="540" y1="740" x2="1290" y2="744"/>
<line x1="575" y1="744" x2="618" y2="679"/><line x1="624" y1="746" x2="667" y2="680"/>
<line x1="672" y1="746" x2="716" y2="681"/><line x1="705" y1="746" x2="749" y2="682"/>
<line x1="877" y1="748" x2="921" y2="684"/><line x1="1080" y1="750" x2="1124" y2="685"/>
<line x1="1129" y1="750" x2="1170" y2="690"/><line x1="1140" y1="732" x2="1172" y2="686"/><line x1="1178" y1="752" x2="1222" y2="686"/>
<line x1="508" y1="737" x2="560" y2="664"/><line x1="1257" y1="744" x2="1298" y2="684"/>
</g>
<text transform="translate(481,746) rotate(-54)" font-family="Liberation Sans" font-size="15" fill="none" stroke="#ececec" stroke-width="0.9" letter-spacing="0.2">1500003000</text>
<text transform="translate(1274,757) rotate(-55)" font-family="Liberation Sans" font-size="15" fill="none" stroke="#ececec" stroke-width="0.9" letter-spacing="0.2">1500003000</text>
</g>
</svg>

<!-- axis indicator -->
<svg class="abs" style="left:40px;top:880px" width="60" height="64" viewBox="0 0 60 64">
<rect x="8" y="2" width="8" height="12" fill="#1a1d40"/>
<rect x="8" y="14.5" width="8" height="14" fill="#1c1c90"/>
<path d="M9,17 H15 L9,26 H15" fill="none" stroke="#3a3ad8" stroke-width="1.4"/>
<polygon points="7.5,37.7 12,28.5 16.5,37.7" fill="#1414ff"/>
<rect x="9.6" y="37" width="5.2" height="14" fill="#1414f0"/>
<path d="M16,38 L19.5,43 L23,38 M19.5,43 V49" fill="none" stroke="#30f030" stroke-width="1.8"/>
<rect x="15.5" y="45" width="5.5" height="6.5" fill="#20d020"/>
<rect x="8.5" y="51" width="7.5" height="8" fill="#e8e0e0"/>
<rect x="16" y="51.6" width="14" height="5.8" fill="#ff1010"/>
<polygon points="29.3,49.3 40.8,54.5 29.3,59.7" fill="#ff1010"/>
<path d="M45.5,48.5 L52,59.5 M52,48.5 L45.5,59.5" stroke="#ff2020" stroke-width="1.7"/>
</svg>
<div id="tabs" class="abs"></div>
<div id="status" class="abs"></div>
<!-- tab bar -->
<div class="abs" style="left:0;top:986px;width:1920px;height:1px;background:#fafafa"></div>
<div class="abs" style="left:0;top:987px;width:57px;height:26px;border-top:1px solid #c8c8c8;border-right:1px solid #c8c8c8;background:#f0f0f0"></div>
<div class="abs" style="left:57px;top:987px;width:116px;height:26px;background:#ffffff"></div>
<div class="abs" style="left:56px;top:1010px;width:118px;height:2px;background:#2a86e8"></div>
<div class="abs" style="left:0;top:1013px;width:1920px;height:1px;background:#bdbdbd"></div>
<div class="abs" style="left:173px;top:987px;width:1747px;height:1px;background:#d8d8d8"></div>
<svg class="abs" style="left:75px;top:991px" width="18" height="17" viewBox="0 0 18 17">
<polygon points="9,0 17,3.5 9,7 1,3.5" fill="#2a86e8"/><polygon points="1,5 8,8.5 8,16.5 1,13" fill="#2a86e8"/><polygon points="10,8.5 17,5 17,13 10,16.5" fill="#2a86e8"/>
</svg>
<div class="abs" style="left:96px;top:991px;font-size:14px;color:#4a90e2;white-space:nowrap">Modeling</div>
<svg class="abs" style="left:195px;top:992px" width="18" height="17" viewBox="0 0 18 17">
<rect x="1" y="1" width="13" height="15" rx="1.5" fill="none" stroke="#333" stroke-width="1.2"/><path d="M14,4 H16 V15 Q16,16 15,16" fill="none" stroke="#333" stroke-width="1.2"/>
<path d="M3,4 H7 M3,7 H12 M3,9.5 H12 M3,12 H12" stroke="#333" stroke-width="1"/><rect x="3" y="3" width="4" height="3" fill="#333"/>
</svg>
<div class="abs" style="left:216px;top:993px;font-size:14px;color:#222;white-space:nowrap">BQ</div>
<svg class="abs" style="left:280px;top:992px" width="15" height="17" viewBox="0 0 15 17">
<rect x="1.5" y="3" width="12" height="13" rx="1.5" fill="none" stroke="#333" stroke-width="1.2"/><rect x="4.5" y="1" width="6" height="3" fill="none" stroke="#333" stroke-width="1"/>
<path d="M4,8 H11 M4,11 H11" stroke="#333" stroke-width="1"/>
</svg>
<div class="abs" style="left:298px;top:993px;font-size:14.3px;color:#222;white-space:nowrap">Report</div>

<!-- status bar -->
<div class="abs st" style="left:2px">X = -11053 Y = 74067 Z = -80</div>
<div class="abs st" style="left:205px">Floor Height: 3.200</div>
<div class="abs st" style="left:322px">Bottom Elev: -0.080</div>
<div class="abs st" style="left:544px">0</div>
<div class="abs st" style="left:1052px">Specify first corner point, or pick element entity</div>
<div class="abs st" style="left:1839px">22.7273 FPS</div>
<svg class="abs" style="left:640px;top:1014px" width="410" height="25" viewBox="0 0 410 25">
<rect x="7.5" y="4.5" width="24" height="20" fill="#a6a6a6" stroke="#6e6e6e"/>
<path d="M12,8 V20 H24 M12,16 H16 V20" fill="none" stroke="#333" stroke-width="1"/>
<rect x="35.5" y="4.5" width="35" height="20" fill="#fff" stroke="#6aa8ea"/>
<rect x="41.5" y="9.5" width="11" height="11" fill="none" stroke="#3a7ad8"/><rect x="40" y="8" width="3" height="3" fill="#f08a30"/>
<path d="M61,14 L65,14 L63,16Z" fill="#444"/>
<rect x="74.5" y="4.5" width="24" height="20" fill="#a6a6a6" stroke="#8e8e8e"/>
<path d="M78,8 L95,22 M95,8 L78,22" stroke="#8a8a8a" stroke-width="1"/>
<rect x="102.5" y="4.5" width="35" height="20" fill="#a6a6a6" stroke="#7e7e7e"/>
<path d="M106,21 H122 M107,21 L118,11" stroke="#222" stroke-width="1"/><circle cx="112" cy="16" r="1.5" fill="#222"/>
<path d="M129,14 L133,14 L131,16Z" fill="#444"/>
<rect x="142.5" y="4.5" width="34" height="20" fill="#fff" stroke="#6aa8ea"/>
<path d="M147,10 H153 M150,7 V13" stroke="#3a7ad8" stroke-width="1"/><rect x="151" y="14" width="9" height="4" fill="#3a7ad8"/>
<path d="M169,14 L173,14 L171,16Z" fill="#444"/>
<rect x="180.5" y="4.5" width="115" height="20" fill="#fff" stroke="#6aa8ea"/>
<rect x="303.5" y="4.5" width="104" height="20" rx="2" fill="#fff" stroke="#9a9a9a"/>
<path d="M392,11 L400,11 L396,17Z" fill="#333"/>
</svg>
<div class="abs st" style="left:825px;font-size:12.3px">Cross-Layer Select</div>
<div class="abs st" style="left:946px">No Work Plane</div>
</body></html>
